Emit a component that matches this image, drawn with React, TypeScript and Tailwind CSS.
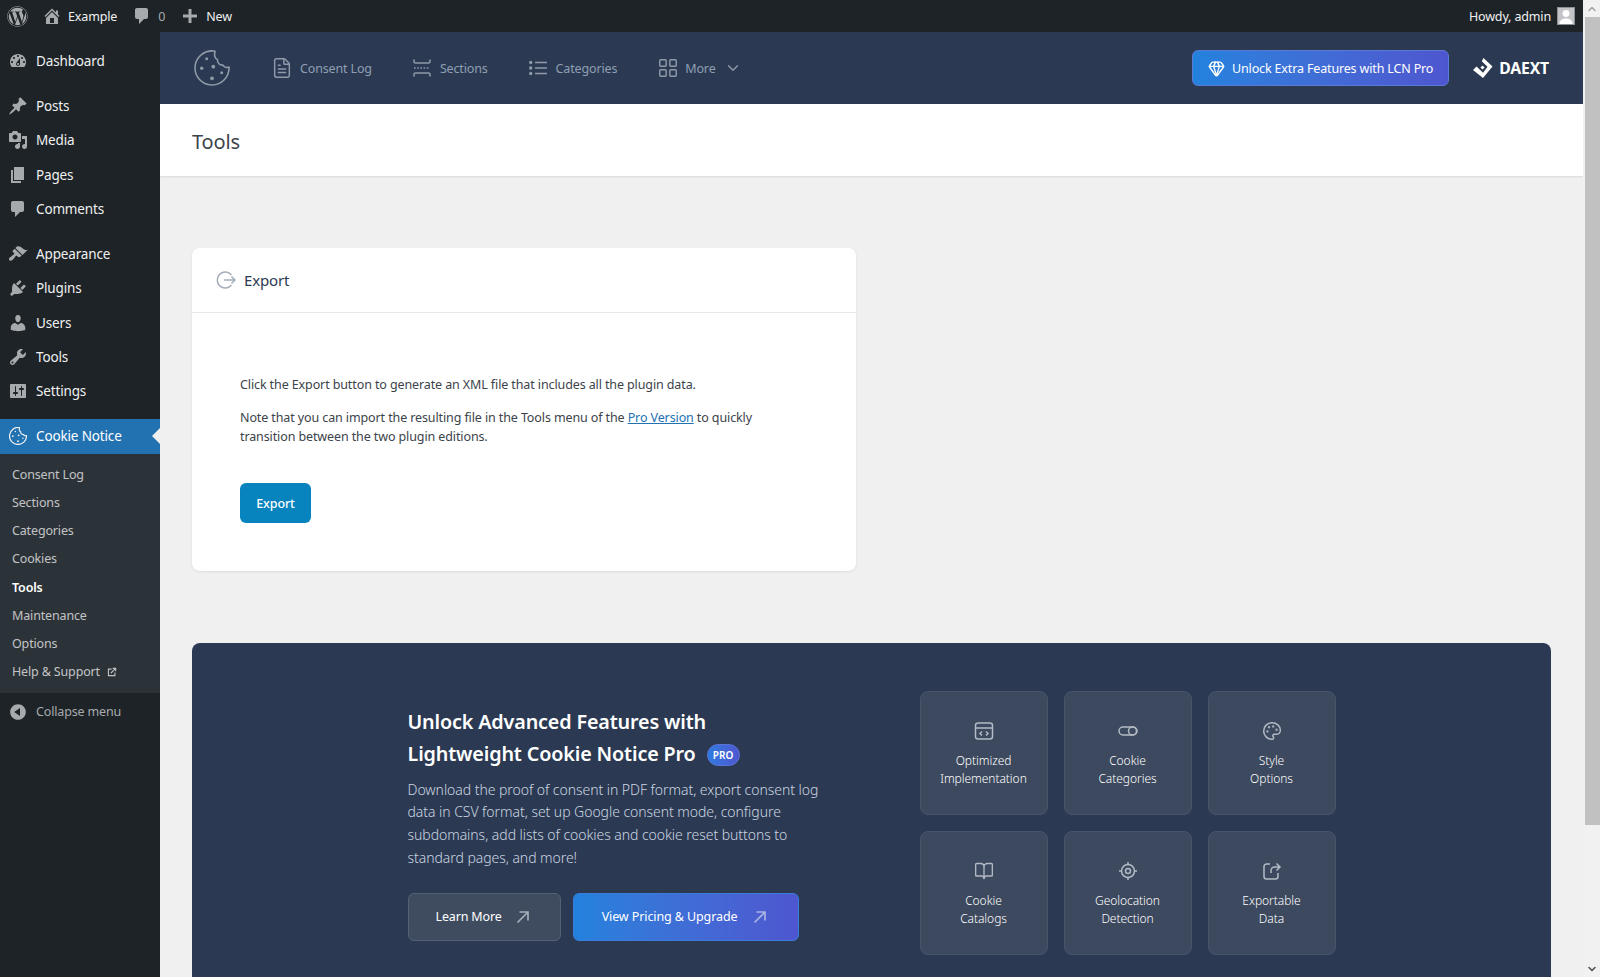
import React from "react";
import { FileText, LayoutGrid, ChevronDown, Gem, Palette, BookOpen, ChevronUp } from "lucide-react";
import { FaWordpress } from "react-icons/fa";

const D: Record<string, string> = {
  home: "M16 8.5l1.53 1.53-1.06 1.06L10 4.62l-6.47 6.47-1.06-1.06L10 2.5l4 4v-2h2v4zm-6-2.46l6 5.99V18H4v-5.97zM12 17v-5H8v5h4z",
  dashboard: "M3.76 16h12.48c1.1-1.37 1.76-3.11 1.76-5 0-4.42-3.58-8-8-8s-8 3.58-8 8c0 1.89.66 3.63 1.76 5zM10 4c.55 0 1 .45 1 1s-.45 1-1 1-1-.45-1-1 .45-1 1-1zM6 6c.55 0 1 .45 1 1s-.45 1-1 1-1-.45-1-1 .45-1 1-1zm8 0c.55 0 1 .45 1 1s-.45 1-1 1-1-.45-1-1 .45-1 1-1zm-5.37 5.55L12 7v6c0 1.1-.9 2-2 2s-2-.9-2-2c0-.57.24-1.08.63-1.45zM4 10c.55 0 1 .45 1 1s-.45 1-1 1-1-.45-1-1 .45-1 1-1zm12 0c.55 0 1 .45 1 1s-.45 1-1 1-1-.45-1-1 .45-1 1-1zm-5 3c0-.55-.45-1-1-1s-1 .45-1 1 .45 1 1 1 1-.45 1-1z",
  post: "M10.44 3.02l1.82-1.82 6.36 6.35-1.83 1.82c-1.05-.68-2.48-.57-3.41.36l-.75.75c-.92.93-1.04 2.35-.35 3.41l-1.83 1.82-2.41-2.41-2.8 2.79c-.42.42-3.38 2.71-3.8 2.29s1.86-3.39 2.28-3.81l2.79-2.79L4.1 9.36l1.83-1.82c1.05.69 2.48.57 3.4-.36l.75-.75c.93-.92 1.05-2.35.36-3.41z",
  media: "M13 11V4c0-.55-.45-1-1-1h-1.67L9 1H5L3.67 3H2c-.55 0-1 .45-1 1v7c0 .55.45 1 1 1h10c.55 0 1-.45 1-1zM7 4.5c1.38 0 2.5 1.12 2.5 2.5S8.38 9.5 7 9.5 4.5 8.38 4.5 7 5.62 4.5 7 4.5zM14 6h5v10.5c0 1.38-1.12 2.5-2.5 2.5S14 17.88 14 16.5s1.12-2.5 2.5-2.5c.17 0 .34.02.5.05V9h-3V6zm-4 8.05V13h2v3.5c0 1.38-1.12 2.5-2.5 2.5S7 17.88 7 16.5 8.12 14 9.5 14c.17 0 .34.02.5.05z",
  page: "M6 15V2h10v13H6zm-1 1h8v2H3V5h2v11z",
  comment: "M5 2h9c1.1 0 2 .9 2 2v7c0 1.1-.9 2-2 2h-2l-5 5v-5H5c-1.1 0-2-.9-2-2V4c0-1.1.9-2 2-2z",
  appearance: "M14.48 11.06L7.41 3.99l1.5-1.5c.5-.56 2.3-.47 3.51.32 1.21.8 1.43 1.28 2.91 2.1 1.18.64 2.45 1.26 4.45.85zm-.71.71L6.7 4.7 4.93 6.47c-.39.39-.39 1.02 0 1.41l1.06 1.06c.39.39.39 1.03 0 1.42-.6.6-1.43 1.11-2.21 1.69-.35.26-.7.53-1.01.84C1.43 13.23.91 14.2 1.04 15.1l.14.9c.3.4.5.6.9.8.9.1 1.9-.4 3.15-1.64.31-.31.58-.66.84-1.01.58-.78 1.09-1.61 1.69-2.21.39-.39 1.03-.39 1.42 0l1.06 1.06c.39.39 1.02.39 1.41 0z",
  plugin: "M13.11 4.36L9.87 7.6 8 5.73l3.24-3.24c.35-.34 1.05-.2 1.56.32.52.51.66 1.21.31 1.55zm-8 1.77l.91-1.12 9.01 9.01-1.19.84c-.71.71-2.63 1.16-3.82 1.16H6.14L4.9 17.26c-.59.59-1.54.59-2.12 0-.59-.58-.59-1.53 0-2.12l1.24-1.24v-3.88c0-1.13.4-3.19 1.09-3.89zm7.26 3.97l3.24-3.24c.34-.35 1.04-.21 1.55.31.52.51.66 1.21.31 1.55l-3.24 3.25z",
  users: "M10 9.25c-2.27 0-2.73-3.44-2.73-3.44C7 4.02 7.82 2 9.97 2c2.16 0 2.98 2.02 2.71 3.81 0 0-.41 3.44-2.68 3.44zm0 2.57L12.72 10c2.39 0 4.52 2.33 4.52 4.53v2.49s-3.65 1.13-7.24 1.13c-3.65 0-7.24-1.13-7.24-1.13v-2.49c0-2.25 1.94-4.48 4.47-4.48z",
  tools: "M16.68 9.77c-1.34 1.34-3.3 1.67-4.95.99l-5.41 6.52c-.99.99-2.59.99-3.58 0s-.99-2.59 0-3.57l6.52-5.42c-.68-1.65-.35-3.61.99-4.95 1.28-1.28 3.12-1.62 4.72-1.06l-2.89 2.89 2.82 2.82 2.86-2.87c.53 1.58.18 3.39-1.08 4.65zM3.81 16.21c.4.39 1.04.39 1.43 0 .4-.4.4-1.04 0-1.43-.39-.4-1.03-.4-1.43 0-.39.39-.39 1.03 0 1.43z",
  settings: "M18 16V4c0-.55-.45-1-1-1H3c-.55 0-1 .45-1 1v12c0 .55.45 1 1 1h14c.55 0 1-.45 1-1zM8 11h1c.55 0 1 .45 1 1s-.45 1-1 1H8v1.5c0 .28-.22.5-.5.5s-.5-.22-.5-.5V13H6c-.55 0-1-.45-1-1s.45-1 1-1h1V5.5c0-.28.22-.5.5-.5s.5.22.5.5V11zm5-2h-1c-.55 0-1-.45-1-1s.45-1 1-1h1V5.5c0-.28.22-.5.5-.5s.5.22.5.5V7h1c.55 0 1 .45 1 1s-.45 1-1 1h-1v5.5c0 .28-.22.5-.5.5s-.5-.22-.5-.5V9z",
  collapse: "M10 2.16c4.33 0 7.84 3.51 7.84 7.84s-3.51 7.84-7.84 7.84S2.16 14.33 2.16 10 5.71 2.16 10 2.16zm2 11.72V6.12L6.18 9.97z",
  plus: "M17 8.5v3h-5.5V17h-3v-5.5H3v-3h5.5V3h3v5.5z",
};

function Dash({ name, className }: { name: string; className: string }) {
  return (
    <svg viewBox="0 0 20 20" fill="currentColor" fillRule="evenodd" className={className}>
      <path d={D[name]} />
    </svg>
  );
}

function CookieIcon({ className, width = 1.6 }: { className: string; width?: number }) {
  return (
    <svg viewBox="0 0 36 36" fill="none" stroke="currentColor" strokeWidth={width} className={className}>
      <path d="M21 1.2A17 17 0 1 0 35 17c-2 1-5 .5-6-2-3 .5-6-2-5.5-5.5-2.5-.5-3.5-4-2.5-8.3z" strokeLinejoin="round" />
      <g fill="currentColor" stroke="none">
        <circle cx="12.7" cy="8.8" r="1.5" />
        <circle cx="19.3" cy="16.7" r="1.9" />
        <circle cx="7.7" cy="18.3" r="1.7" />
        <circle cx="27.7" cy="22.7" r="1.5" />
        <circle cx="18" cy="28.3" r="1.9" />
      </g>
    </svg>
  );
}

function SectionsIcon() {
  return (
    <svg viewBox="0 0 18 18" fill="none" stroke="currentColor" strokeWidth="1.6" className="w-[18px] h-[18px]">
      <path d="M1 0.5v1.9c0 1 .6 1.6 1.6 1.6h12.8c1 0 1.6-.6 1.6-1.6V0.5" />
      <path d="M1 17.5v-1.900c0-1 .6-1.600 1.600-1.600h12.800c1 0 1.600.6 1.600 1.600v1.900" />
      <path d="M1 9h16" strokeDasharray="1.6 1.6" strokeWidth="1.3" />
    </svg>
  );
}

function ListIcon() {
  return (
    <svg viewBox="0 0 18 18" fill="none" stroke="currentColor" strokeWidth="1.6" className="w-[18px] h-[18px]">
      <path d="M6 3.5h12M6 9h12M6 14.5h12" />
      <g fill="currentColor" stroke="none">
        <circle cx="1.7" cy="3.5" r="1.7" />
        <circle cx="1.7" cy="9" r="1.7" />
        <circle cx="1.7" cy="14.5" r="1.7" />
      </g>
    </svg>
  );
}

function Arrow({ className }: { className: string }) {
  return (
    <svg viewBox="0 0 16 16" fill="none" stroke="currentColor" strokeWidth="1.7" className={className}>
      <path d="M2.5 13.5L13 3M4.5 3H13v8.5" />
    </svg>
  );
}

const top1 = [{ i: "dashboard", t: "Dashboard" }];
const top2 = [
  { i: "post", t: "Posts" },
  { i: "media", t: "Media" },
  { i: "page", t: "Pages" },
  { i: "comment", t: "Comments" },
];
const top3 = [
  { i: "appearance", t: "Appearance" },
  { i: "plugin", t: "Plugins" },
  { i: "users", t: "Users" },
  { i: "tools", t: "Tools" },
  { i: "settings", t: "Settings" },
];
const subs = ["Consent Log", "Sections", "Categories", "Cookies", "Tools", "Maintenance", "Options", "Help & Support"];

function MenuRow({ i, t }: { i: string; t: string }) {
  return (
    <div className="h-[34.33px] flex items-center text-[13.5px] text-[#f0f0f1]">
      <span className="w-9 flex justify-center text-[#a7aaad]">
        <Dash name={i} className="w-5 h-5" />
      </span>
      <span>{t}</span>
    </div>
  );
}

function Group({ items }: { items: { i: string; t: string }[] }) {
  return (
    <div>
      {items.map((m) => (
        <MenuRow key={m.t} i={m.i} t={m.t} />
      ))}
    </div>
  );
}

function Sidebar() {
  return (
    <aside className="w-40 shrink-0 bg-[#1d2327] pt-3 flex flex-col">
      <Group items={top1} />
      <div className="h-[10.67px]" />
      <Group items={top2} />
      <div className="h-[10.67px]" />
      <Group items={top3} />
      <div className="h-[10.67px]" />
      <div className="relative h-[34.33px] bg-[#2271b1] flex items-center text-[13.5px] text-white">
        <span className="w-9 flex justify-center text-[#f0f0f1]">
          <CookieIcon className="w-[18px] h-[18px]" width={2.4} />
        </span>
        <span>Cookie Notice</span>
        <span className="absolute right-0 top-[9px] w-0 h-0 border-y-[8px] border-y-transparent border-r-[8px] border-r-[#f0f0f1]" />
      </div>
      <div className="bg-[#2c3338] pt-[7.8px] pb-[7px]">
        {subs.map((s) => (
          <div key={s} className={`h-[28.14px] pl-3 flex items-center text-[12.5px] ${s === "Tools" ? "text-white font-semibold" : "text-[#c3c4c7]"}`}>
            {s}
            {s.startsWith("Help") && (
              <svg viewBox="0 0 12 12" fill="none" stroke="currentColor" strokeWidth="1.3" className="w-[10px] h-[10px] ml-[7px]">
                <path d="M9.5 6.5v3.8H1.7V2.5h3.8" />
                <path d="M4.5 7.5L10 2M6.8 1.6h3.6v3.6" />
              </svg>
            )}
          </div>
        ))}
      </div>
      <div className="h-[36px] pt-[2px] flex items-center text-[12.5px] text-[#a7aaad]">
        <span className="w-9 flex justify-center">
          <Dash name="collapse" className="w-5 h-5" />
        </span>
        Collapse menu
      </div>
    </aside>
  );
}

function AdminBar() {
  return (
    <header className="h-8 shrink-0 bg-[#1d2327] flex items-center justify-between text-[12.5px] text-[#f0f0f1]">
      <div className="flex items-center">
        <FaWordpress className="ml-[7px] w-[21px] h-[21px] text-[#a7aaad]" />
        <Dash name="home" className="ml-[14px] w-5 h-5 text-[#a7aaad]" />
        <span className="ml-[6px] pt-[2px]">Example</span>
        <Dash name="comment" className="ml-[15px] w-5 h-5 text-[#a7aaad]" />
        <span className="ml-[6px] pt-[2px] text-[#a7aaad]">0</span>
        <Dash name="plus" className="ml-[15px] w-5 h-5 text-[#a7aaad]" />
        <span className="ml-[6px] pt-[2px]">New</span>
      </div>
      <div className="flex items-center pr-2">
        <span className="pt-[2px]">Howdy, admin</span>
        <span className="ml-[6px] w-[18px] h-[18px] bg-[#c3c4c7] border border-[#8c8f94] overflow-hidden text-white flex items-end justify-center">
          <svg viewBox="0 0 16 16" fill="currentColor" className="w-4 h-4">
            <circle cx="8" cy="5.5" r="3.4" />
            <path d="M1.5 16c0-4 3-5.5 6.5-5.5s6.5 1.5 6.5 5.5z" />
          </svg>
        </span>
      </div>
    </header>
  );
}

function PluginHeader() {
  const text = "text-[12.5px] text-[#8f9fb3] pt-[2px]";
  return (
    <div className="h-[72px] shrink-0 bg-[#2b3a52] flex items-center pl-[34px] pr-[34px] text-[#8f99a8]">
      <CookieIcon className="w-9 h-9" />
      <FileText className="ml-[41px] w-[22px] h-[22px]" strokeWidth={1.6} />
      <span className={`ml-[7px] ${text}`}>Consent Log</span>
      <span className="ml-[41px] flex">
        <SectionsIcon />
      </span>
      <span className={`ml-[9px] ${text}`}>Sections</span>
      <span className="ml-[41px] flex">
        <ListIcon />
      </span>
      <span className={`ml-[9px] ${text}`}>Categories</span>
      <LayoutGrid className="ml-[40px] w-[22px] h-[22px]" strokeWidth={1.6} />
      <span className={`ml-[6px] ${text}`}>More</span>
      <ChevronDown className="ml-[8px] w-[18px] h-[18px]" strokeWidth={1.8} />
      <div className="ml-auto flex items-center">
        <div className="h-9 w-[257px] rounded-md border border-[#5b7ad6] bg-gradient-to-r from-[#2282dd] to-[#4e56cf] flex items-center justify-center text-[12.5px] text-white">
          <Gem className="w-[17px] h-[17px] mr-[7px]" strokeWidth={2} />
          <span className="pt-[2px]">Unlock Extra Features with LCN Pro</span>
        </div>
        <div className="ml-[24px] flex items-center text-white">
          <svg viewBox="0 0 20 20" fill="currentColor" className="w-5 h-5">
            <path d="M10.5 0L19.5 8.5 10 20 0 12 3.5 8.5 10 14.8 14.5 8.7 8.8 3.2z" />
            <rect x="8" y="8" width="3" height="3" transform="rotate(45 9.5 9.5)" />
          </svg>
          <span className="ml-[6px] pt-[2px] text-[15.75px] font-bold">DAEXT</span>
        </div>
      </div>
    </div>
  );
}

function Feature({ icon, a, b }: { icon: React.ReactNode; a: string; b: string }) {
  return (
    <div className="h-[124px] pt-[3px] rounded-lg bg-[#3c495e] border border-[#485569] flex flex-col items-center justify-center text-center text-white">
      <span className="text-[#b3bac5] flex">{icon}</span>
      <div className="mt-[11px] text-[12px] leading-[18px] font-light tracking-[-0.05px]">
        {a}
        <br />
        {b}
      </div>
    </div>
  );
}

const ic = "w-5 h-5";

function ProPanel() {
  return (
    <section className="mt-[72px] rounded-lg bg-[#2b3a52] p-12 flex justify-center items-center gap-24">
      <div className="w-[416px]">
        <h2 className="text-[19.75px] leading-8 font-semibold text-white">
          Unlock Advanced Features with
          <br />
          Lightweight Cookie Notice Pro
          <span className="inline-flex align-middle ml-[11px] w-[33px] h-[22px] rounded-full border border-[#5a74d6] bg-gradient-to-r from-[#2a7ade] to-[#4e56cf] items-center justify-center text-[10px] font-semibold tracking-normal">
            PRO
          </span>
        </h2>
        <p className="mt-[9px] text-[14px] leading-[22.75px] font-light text-[#cbd5e1] tracking-[-0.05px]">
          Download the proof of consent in PDF format, export consent log data in CSV format, set up Google consent mode, configure subdomains, add lists of cookies and cookie reset buttons to standard pages, and more!
        </p>
        <div className="mt-[23px] flex gap-3">
          <div className="h-12 rounded-md bg-[#3f4c60] border border-[#556072] pl-[27px] pr-[29px] flex items-center gap-[13px] text-[12.5px] text-white">
            <span className="pt-[2px]">Learn More</span>
            <Arrow className="w-4 h-4 text-[#a5adb9]" />
          </div>
          <div className="h-12 rounded-md border border-[#3a7bdc] bg-gradient-to-r from-[#2282dd] to-[#4e56cf] pl-[28px] pr-[30px] flex items-center gap-[15px] text-[12.5px] text-white tracking-[-0.1px]">
            <span className="pt-[2px]">View Pricing &amp; Upgrade</span>
            <Arrow className="w-4 h-4 text-[#a8b4e2]" />
          </div>
        </div>
      </div>
      <div className="w-[416px] grid grid-cols-3 gap-4">
        <Feature
          a="Optimized"
          b="Implementation"
          icon={
            <svg viewBox="0 0 20 20" fill="none" stroke="currentColor" strokeWidth="1.5" className={ic}>
              <rect x="1.5" y="2" width="17" height="16" rx="2.5" />
              <path d="M1.5 7h17M8 10.5l-2 2 2 2M12 10.5l2 2-2 2" />
            </svg>
          }
        />
        <Feature
          a="Cookie"
          b="Categories"
          icon={
            <svg viewBox="0 0 20 20" fill="none" stroke="currentColor" strokeWidth="1.5" className={ic}>
              <rect x="1" y="6" width="18" height="8" rx="4" />
              <circle cx="14.5" cy="10" r="4" />
            </svg>
          }
        />
        <Feature a="Style" b="Options" icon={<Palette className={ic} strokeWidth={1.8} />} />
        <Feature a="Cookie" b="Catalogs" icon={<BookOpen className={ic} strokeWidth={1.6} />} />
        <Feature
          a="Geolocation"
          b="Detection"
          icon={
            <svg viewBox="0 0 20 20" fill="none" stroke="currentColor" strokeWidth="1.5" className={ic}>
              <circle cx="10" cy="10" r="6.5" />
              <circle cx="10" cy="10" r="2.5" />
              <path d="M10 1v2.5M10 16.5V19M1 10h2.5M16.5 10H19" />
            </svg>
          }
        />
        <Feature
          a="Exportable"
          b="Data"
          icon={
            <svg viewBox="0 0 20 20" fill="none" stroke="currentColor" strokeWidth="1.5" className={ic}>
              <path d="M8 3H4.5A2.5 2.5 0 0 0 2 5.5v10A2.5 2.5 0 0 0 4.5 18h9a2.5 2.5 0 0 0 2.5-2.5V12" />
              <path d="M9 12V9.5A3.5 3.5 0 0 1 12.5 6H18M14.5 2.5L18 6l-3.5 3.5" />
            </svg>
          }
        />
      </div>
    </section>
  );
}

function ExportCard() {
  return (
    <section className="w-[664px] h-[323px] rounded-lg bg-white shadow-[0_1px_3px_rgba(0,0,0,0.08)]">
      <div className="h-[65px] border-b border-[#e8e8ea] flex items-center pl-[24px]">
        <svg viewBox="0 0 20 20" fill="none" stroke="#a4adbb" strokeWidth="1.5" className="w-[20px] h-[20px]">
          <path d="M15.5 5A8 8 0 1 0 15.5 15" />
          <path d="M8 10h11M15.5 6.5L19 10l-3.5 3.5" />
        </svg>
        <span className="ml-[8px] text-[15px] text-[#2b3a52]">Export</span>
      </div>
      <div className="px-12 pt-[62px] text-[12.5px] leading-[19px] text-[#3c434a] tracking-[-0.11px]">
        <p>Click the Export button to generate an XML file that includes all the plugin data.</p>
        <p className="mt-[14px] max-w-[530px]">
          Note that you can import the resulting file in the Tools menu of the{" "}
          <a className="text-[#2271b1] underline">Pro Version</a> to quickly transition between the two plugin editions.
        </p>
        <div className="mt-[37px] w-[71px] h-10 rounded-md bg-[#0783be] text-white flex items-center justify-center font-medium">
          Export
        </div>
      </div>
    </section>
  );
}

function Scrollbar() {
  return (
    <div className="w-[17px] shrink-0 bg-[#f1f1f1] flex flex-col items-center">
      <div className="h-[17px] flex items-center text-[#a3a3a3]">
        <ChevronUp className="w-3 h-3" strokeWidth={3} />
      </div>
      <div className="w-[15px] ml-[2px] h-[808px] bg-[#c1c1c1]" />
      <div className="flex-1" />
      <div className="h-[17px] flex items-center text-[#505050]">
        <ChevronDown className="w-3 h-3" strokeWidth={3} />
      </div>
    </div>
  );
}

export default function App() {
  return (
    <div className="h-[977px] w-full flex overflow-hidden font-['Noto_Sans',sans-serif] tracking-[-0.15px] bg-[#f0f0f1]">
      <div className="flex-1 min-w-0 flex flex-col">
        <AdminBar />
        <div className="flex-1 min-h-0 flex">
          <Sidebar />
          <main className="flex-1 min-w-0 flex flex-col overflow-hidden">
            <PluginHeader />
            <div className="h-[72px] shrink-0 bg-white flex items-center pl-8 pt-[3px] text-[20px] text-[#3c434a] shadow-[0_1px_2px_rgba(0,0,0,0.1)]">
              Tools
            </div>
            <div className="pt-[72px] px-8">
              <ExportCard />
              <ProPanel />
            </div>
          </main>
        </div>
      </div>
      <Scrollbar />
    </div>
  );
}
